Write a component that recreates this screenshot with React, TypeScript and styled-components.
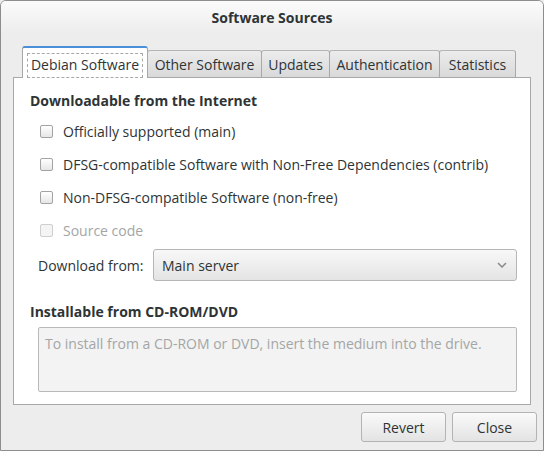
import React, { useState } from "react"
import styled, { createGlobalStyle } from "styled-components"

const GlobalStyle = createGlobalStyle`
  html, body {
    margin: 0;
    padding: 0;
    background: #ededed;
  }
  body {
    font-family: "Open Sans", "DejaVu Sans", sans-serif;
    font-size: 14px;
    color: #2e3436;
  }
`

const Window = styled.div`
  width: 544px;
  height: 451px;
  box-sizing: border-box;
  border: 1px solid #8d8d8d;
  border-radius: 6px 6px 0 0;
  background: #ededed;
  display: flex;
  flex-direction: column;
  overflow: hidden;
`

const TitleBar = styled.div`
  height: 32px;
  display: flex;
  align-items: center;
  justify-content: center;
  font-weight: 700;
  font-size: 14px;
  color: #2e3436;
  background: linear-gradient(#fbfbfb, #ededed);
`

const Body = styled.div`
  flex: 1;
  display: flex;
  flex-direction: column;
  padding: 14px 6px 0 12px;
`

const Notebook = styled.div`
  display: flex;
  flex-direction: column;
  margin-right: 6px;
`

const TabRow = styled.div`
  display: flex;
  align-items: flex-end;
  height: 31px;
  padding-left: 9px;
  position: relative;
  z-index: 1;
  margin-bottom: -1px;
`

const Tab = styled.div<{ $active?: boolean; $w: number }>`
  box-sizing: border-box;
  width: ${(p) => p.$w}px;
  height: ${(p) => (p.$active ? 32 : 28)}px;
  display: flex;
  align-items: center;
  justify-content: center;
  border: 1px solid #a8a8a8;
  border-bottom: ${(p) => (p.$active ? "none" : "1px solid #a8a8a8")};
  border-top: ${(p) => (p.$active ? "2px solid #4a90d9" : "1px solid #b4b4b4")};
  border-radius: 3px 3px 0 0;
  margin-left: ${(p) => (p.$active ? 0 : -1)}px;
  background: ${(p) => (p.$active ? "#ffffff" : "linear-gradient(#ececec, #d9d9d9)")};
  color: #2e3436;
  padding-top: ${(p) => (p.$active ? 4 : 3)}px;
`

const TabLabel = styled.span<{ $focus?: boolean }>`
  padding: 2px 3px 3px;
  border: 1px dashed ${(p) => (p.$focus ? "#a8a8a8" : "transparent")};
  line-height: 18px;
  white-space: nowrap;
`

const Panel = styled.div`
  box-sizing: border-box;
  height: 328px;
  background: #ffffff;
  border: 1px solid #a8a8a8;
  padding: 12px 13px 0 16px;
  display: flex;
  flex-direction: column;
`

const SectionTitle = styled.div`
  font-weight: 700;
  height: 22px;
  line-height: 22px;
`

const CheckList = styled.div`
  display: flex;
  flex-direction: column;
  padding-left: 10px;
  margin-top: 3px;
`

const CheckRow = styled.label<{ $disabled?: boolean }>`
  display: flex;
  align-items: center;
  height: 33px;
  white-space: nowrap;
  color: ${(p) => (p.$disabled ? "#a4a6a6" : "#2e3436")};
`

const Box = styled.span<{ $disabled?: boolean }>`
  box-sizing: border-box;
  width: 13px;
  height: 13px;
  border-radius: 2px;
  border: 1px solid ${(p) => (p.$disabled ? "#cfcfcf" : "#a3a3a3")};
  background: ${(p) => (p.$disabled ? "#f4f4f4" : "linear-gradient(#ffffff, #e6e6e6)")};
  margin-right: 10px;
`

const ComboRow = styled.div`
  display: flex;
  align-items: center;
  padding-left: 8px;
  margin-top: 2px;
  height: 32px;
`

const ComboLabel = styled.span`
  width: 115px;
`

const Combo = styled.div`
  flex: 1;
  box-sizing: border-box;
  height: 32px;
  border: 1px solid #b6b6b6;
  border-radius: 3px;
  background: linear-gradient(#f8f8f8, #e4e4e4);
  display: flex;
  align-items: center;
  justify-content: space-between;
  padding: 0 9px 0 8px;
`

const Arrow = styled.svg`
  width: 10px;
  height: 6px;
`

const CdTitle = styled(SectionTitle)`
  margin-top: 20px;
`

const Hint = styled.div`
  box-sizing: border-box;
  margin: 4px 0 0 8px;
  height: 65px;
  border: 1px solid #b9b9b9;
  border-radius: 2px;
  background: #f3f3f3;
  color: #a4a6a6;
  padding: 6px 6px;
  white-space: nowrap;
`

const ButtonRow = styled.div`
  display: flex;
  justify-content: flex-end;
  gap: 6px;
  margin-top: 7px;
`

const Button = styled.button`
  width: 85px;
  height: 30px;
  box-sizing: border-box;
  border: 1px solid #b3b3b3;
  border-radius: 3px;
  background: linear-gradient(#fafafa, #e3e3e3);
  font-family: inherit;
  font-size: 14px;
  color: #2e3436;
  padding: 0;
`

const tabs = [
  { label: "Debian Software", w: 126 },
  { label: "Other Software", w: 115 },
  { label: "Updates", w: 69 },
  { label: "Authentication", w: 111 },
  { label: "Statistics", w: 77 },
]

const sources = [
  { label: "Officially supported (main)" },
  { label: "DFSG-compatible Software with Non-Free Dependencies (contrib)" },
  { label: "Non-DFSG-compatible Software (non-free)" },
  { label: "Source code", disabled: true },
]

export default function App() {
  const [active] = useState(0)

  return (
    <>
      <GlobalStyle />
      <Window>
        <TitleBar>Software Sources</TitleBar>
        <Body>
          <Notebook>
            <TabRow>
              {tabs.map((t, i) => (
                <Tab key={t.label} $active={i === active} $w={t.w}>
                  <TabLabel $focus={i === active}>{t.label}</TabLabel>
                </Tab>
              ))}
            </TabRow>
            <Panel>
              <SectionTitle>Downloadable from the Internet</SectionTitle>
              <CheckList>
                {sources.map((s) => (
                  <CheckRow key={s.label} $disabled={s.disabled}>
                    <Box $disabled={s.disabled} />
                    {s.label}
                  </CheckRow>
                ))}
              </CheckList>
              <ComboRow>
                <ComboLabel>Download from:</ComboLabel>
                <Combo>
                  <span>Main server</span>
                  <Arrow viewBox="0 0 10 6">
                    <path d="M1 1 L5 5 L9 1" fill="none" stroke="#8a8a8a" strokeWidth="1.5" />
                  </Arrow>
                </Combo>
              </ComboRow>
              <CdTitle>Installable from CD-ROM/DVD</CdTitle>
              <Hint>To install from a CD-ROM or DVD, insert the medium into the drive.</Hint>
            </Panel>
          </Notebook>
          <ButtonRow>
            <Button>Revert</Button>
            <Button>Close</Button>
          </ButtonRow>
        </Body>
      </Window>
    </>
  )
}
